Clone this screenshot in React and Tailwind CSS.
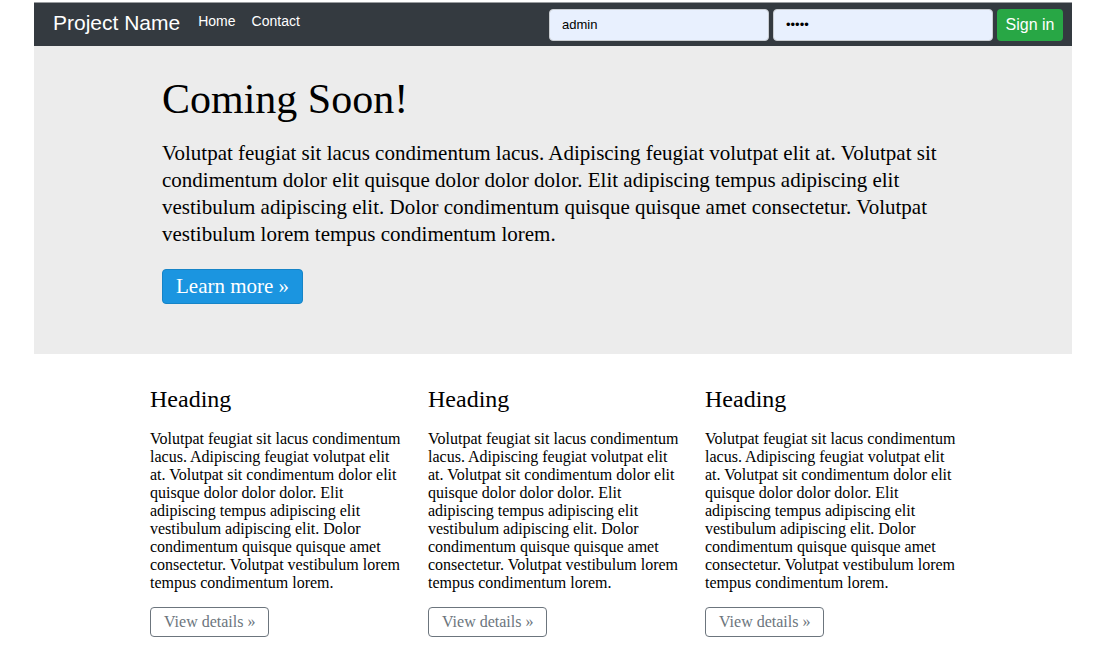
import React from "react";

const body =
  "Volutpat feugiat sit lacus condimentum lacus. Adipiscing feugiat volutpat elit at. Volutpat sit condimentum dolor elit quisque dolor dolor dolor. Elit adipiscing tempus adipiscing elit vestibulum adipiscing elit. Dolor condimentum quisque quisque amet consectetur. Volutpat vestibulum lorem tempus condimentum lorem.";

function Column() {
  return (
    <div className="font-['Liberation_Serif','Times_New_Roman',serif] text-black">
      <h2 className="text-2xl leading-7">Heading</h2>
      <p className="mt-[17px] w-64 text-base leading-[18px]">{body}</p>
      <button className="mt-[15px] h-[30px] rounded border border-[#6c757d] bg-white px-[13px] text-base text-[#6c757d]">
        View details »
      </button>
    </div>
  );
}

function Field({ type, value }) {
  return (
    <input
      readOnly
      type={type}
      value={value}
      className="h-8 w-[220px] rounded border border-[#c9cdd2] bg-[#e8f0fe] px-3 font-['Liberation_Sans',Arial,sans-serif] text-[13px] text-black outline-none"
    />
  );
}

export default function App() {
  return (
    <div className="min-h-[654px] bg-white">
      <div className="mx-auto w-[1038px] pt-0.5">
        <nav className="flex h-11 items-center border-t border-[#9a9da0] bg-[#343a40] pl-[19px] pr-[9px] font-['Liberation_Sans',Arial,sans-serif]">
          <span className="mb-1 text-[21px] leading-none text-white">Project Name</span>
          <div className="ml-[18px] flex gap-4 self-start pt-2 text-sm text-white">
            <a>Home</a>
            <a>Contact</a>
          </div>
          <div className="ml-auto flex items-center gap-1">
            <Field type="text" value="admin" />
            <Field type="password" value="admin" />
            <button className="h-8 w-[66px] rounded bg-[#28a745] text-base text-white">
              Sign in
            </button>
          </div>
        </nav>

        <section className="h-[308px] bg-[#ececec] pl-32 pt-7 font-['Liberation_Serif','Times_New_Roman',serif] text-black">
          <h1 className="text-[42px] leading-[50px]">Coming Soon!</h1>
          <p className="mt-4 w-[790px] text-[21px] leading-[27px]">{body}</p>
          <button className="mt-[21px] h-[35px] rounded border border-[#1684c7] bg-[#1b95e0] px-[13px] text-[21px] text-white">
            Learn more »
          </button>
        </section>

        <div className="grid grid-cols-[278px_277px_277px] pl-[116px] pt-[31px]">
          <Column />
          <Column />
          <Column />
        </div>
      </div>
    </div>
  );
}
